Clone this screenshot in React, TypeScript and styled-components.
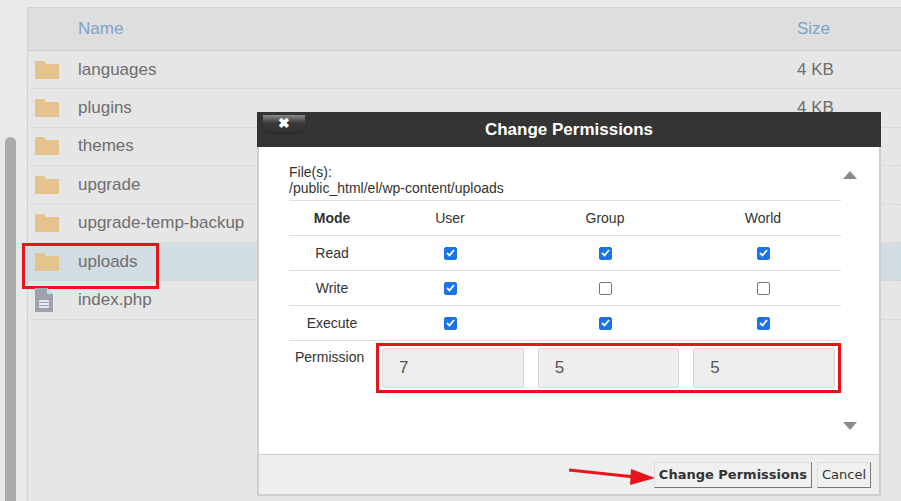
import React from "react";
import styled, { createGlobalStyle } from "styled-components";

const Global = createGlobalStyle`
  html, body { margin: 0; padding: 0; }
  body { width: 901px; height: 501px; overflow: hidden; background: #e9e9e9; font-family: Arial, "Liberation Sans", sans-serif; }
`;

const Page = styled.div`
  position: relative; width: 901px; height: 501px; display: flex; padding: 7px 0 0 0; box-sizing: border-box;
`;
const ScrollCol = styled.div`
  width: 27px; display: flex; justify-content: center; padding-top: 130px;
`;
const Thumb = styled.div`
  width: 11px; height: 380px; border-radius: 6px; background: #ababab; margin-left: -6px;
`;
const Panel = styled.div`
  flex: 1; background: #e6e6e6; border-left: 1px solid #d4d4d4; border-top: 1px solid #d4d4d4;
`;
const Row = styled.div<{ $head?: boolean; $sel?: boolean }>`
  height: ${p => (p.$head ? 42 : 37.4)}px; display: flex; align-items: center;
  border-bottom: 1px ${p => (p.$head ? "solid #cfcfcf" : "dotted #cfd3d6")};
  background: ${p => (p.$head ? "#dedede" : p.$sel ? "#d2dce3" : "#e6e6e6")};
  color: ${p => (p.$head ? "#7ea3c9" : "#6e6e6e")}; font-size: 17px;
`;
const IconCell = styled.div`
  width: 50px; display: flex; justify-content: flex-start; padding-left: 6px; box-sizing: border-box; align-items: center; position: relative;
`;
const NameCell = styled.div` flex: 1; `;
const SizeCell = styled.div` width: 104px; `;
const SelBox = styled.div`
  position: absolute; left: -6px; top: -9px; width: 131px; height: 40px; border: 3px solid #e8141b;
`;

const Dialog = styled.div`
  position: absolute; left: 257px; top: 112px; width: 624px; height: 384px; display: flex; flex-direction: column;
  border: 2px solid #cfcfcf; border-top: none; box-sizing: border-box; background: #fff;
`;
const TitleBar = styled.div`
  height: 35px; background: #343434; color: #fff; font-weight: bold; font-size: 17px;
  display: flex; align-items: center; justify-content: center; position: relative; margin: 0 -2px;
`;
const CloseBtn = styled.div`
  position: absolute; left: 6px; top: 3px; width: 42px; height: 20px; border-radius: 0 0 5px 5px;
  background: linear-gradient(#8a8a8a, #3a3a3a 40%, #2c2c2c); color: #fff; font-size: 14px;
  display: flex; align-items: flex-start; justify-content: center; line-height: 16px;
`;
const Body = styled.div`
  flex: 1; display: flex; padding: 17px 0 0 30px; position: relative;
`;
const Content = styled.div` width: 552px; color: #333; font-size: 14px; `;
const Files = styled.div` line-height: 16px; padding-bottom: 4px; border-bottom: 1px solid #ddd; `;
const TRow = styled.div`
  display: grid; grid-template-columns: 86px 150px 160px 156px; height: 34px; align-items: center;
  border-bottom: 1px solid #ddd; text-align: center;
`;
const Cell = styled.div<{ $bold?: boolean }>` font-weight: ${p => (p.$bold ? "bold" : "normal")}; display: flex; justify-content: center; `;
const Box = styled.div<{ $on?: boolean }>`
  width: 13px; height: 13px; border-radius: 2px; box-sizing: border-box;
  background: ${p => (p.$on ? "#1a73e8" : "#fff")}; border: 1px solid ${p => (p.$on ? "#1a73e8" : "#767676")};
  display: flex; align-items: center; justify-content: center;
`;
const PermRow = styled.div` display: flex; padding-top: 2px; `;
const PermLabel = styled.div` width: 87px; padding: 6px 0 0 6px; box-sizing: border-box; `;
const PermBox = styled.div`
  border: 3px solid #e8141b; display: flex; gap: 14px; padding: 2px 3px; width: 465px; box-sizing: border-box;
`;
const PermInput = styled.div`
  flex: 1; height: 38px; background: #eee; border: 1px solid #d6d6d6; border-radius: 3px;
  font-size: 17px; color: #555; display: flex; align-items: center; padding-left: 16px;
`;
const Arrows = styled.div`
  position: absolute; right: 22px; top: 24px; bottom: 24px; display: flex; flex-direction: column; justify-content: space-between;
`;
const Footer = styled.div`
  height: 39px; background: #eee; border-top: 1px solid #cfcfcf; display: flex; align-items: center;
  justify-content: flex-end; gap: 5px; padding: 0 8px 0 0; position: relative;
`;
const Btn = styled.div<{ $bold?: boolean }>`
  height: 24px; padding: 0 4px; display: flex; align-items: center; font-size: 13px; color: #333;
  font-family: "DejaVu Sans", sans-serif; font-weight: ${p => (p.$bold ? "bold" : "normal")};
  background: #f0f0f0; border: 1px solid #aaa; border-right-color: #777; border-bottom-color: #777;
  border-top-color: #ddd; border-left-color: #ddd;
`;
const ArrowSvg = styled.svg` position: absolute; left: 310px; top: 11px; `;

const Folder = () => (
  <svg width="26" height="20" viewBox="0 0 26 20"><path d="M1 2 Q1 1 2 1 H10 L12 4 H24 Q25 4 25 5 V19 H1 Z" fill="#e4c38f" /></svg>
);
const FileIcon = () => (
  <svg width="20" height="26" viewBox="0 0 20 26"><path d="M1 1 H13 L19 7 V25 H1 Z" fill="#9da0ad" /><path d="M13 1 V7 H19" fill="#d8d8e0" /><path d="M5 14 H15 M5 17 H15 M5 20 H15" stroke="#fff" strokeWidth="1.4" /></svg>
);
const Check = ({ on }: { on?: boolean }) => (
  <Box $on={on}>{on && <svg width="9" height="8" viewBox="0 0 9 8"><path d="M1 4 L3.5 6.5 L8 1" stroke="#fff" strokeWidth="1.8" fill="none" /></svg>}</Box>
);

const rows = [
  { n: "languages", s: "4 KB" }, { n: "plugins", s: "4 KB" }, { n: "themes", s: "" }, { n: "upgrade", s: "" },
  { n: "upgrade-temp-backup", s: "" }, { n: "uploads", s: "", sel: true }, { n: "index.php", s: "", file: true },
];
const perms: [string, boolean[]][] = [
  ["Read", [true, true, true]], ["Write", [true, false, false]], ["Execute", [true, true, true]],
];

export default function App() {
  return (
    <Page>
      <Global />
      <ScrollCol><Thumb /></ScrollCol>
      <Panel>
        <Row $head><IconCell /><NameCell>Name</NameCell><SizeCell>Size</SizeCell></Row>
        {rows.map(r => (
          <Row key={r.n} $sel={r.sel}>
            <IconCell>{r.file ? <FileIcon /> : <Folder />}{r.sel && <SelBox />}</IconCell>
            <NameCell>{r.n}</NameCell><SizeCell>{r.s}</SizeCell>
          </Row>
        ))}
      </Panel>
      <Dialog>
        <TitleBar><CloseBtn>✖</CloseBtn>Change Permissions</TitleBar>
        <Body>
          <Content>
            <Files>File(s):<br />/public_html/el/wp-content/uploads</Files>
            <TRow><Cell $bold>Mode</Cell><Cell>User</Cell><Cell>Group</Cell><Cell>World</Cell></TRow>
            {perms.map(([l, v]) => (
              <TRow key={l}><Cell>{l}</Cell>{v.map((o, i) => <Cell key={i}><Check on={o} /></Cell>)}</TRow>
            ))}
            <PermRow>
              <PermLabel>Permission</PermLabel>
              <PermBox><PermInput>7</PermInput><PermInput>5</PermInput><PermInput>5</PermInput></PermBox>
            </PermRow>
          </Content>
          <Arrows>
            <svg width="14" height="8"><path d="M0 8 L7 0 L14 8 Z" fill="#8a8a8a" /></svg>
            <svg width="14" height="8"><path d="M0 0 L7 8 L14 0 Z" fill="#8a8a8a" /></svg>
          </Arrows>
        </Body>
        <Footer>
          <ArrowSvg width="88" height="20" viewBox="0 0 88 20">
            <path d="M0 4 L66 11" stroke="#e8141b" strokeWidth="3" />
            <path d="M62 3 L86 12 L61 19 Z" fill="#e8141b" />
          </ArrowSvg>
          <Btn $bold>Change Permissions</Btn>
          <Btn>Cancel</Btn>
        </Footer>
      </Dialog>
    </Page>
  );
}
